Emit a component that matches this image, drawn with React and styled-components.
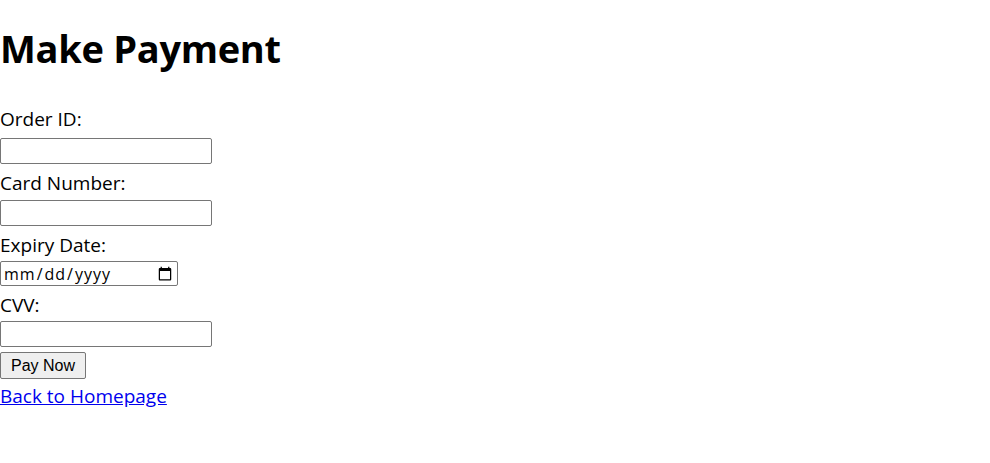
import React from "react";
import styled, { createGlobalStyle } from "styled-components";

const GlobalStyle = createGlobalStyle`
  html, body {
    margin: 0;
    padding: 0;
    background: #ffffff;
  }
  body {
    font-family: "Open Sans", "Noto Sans", sans-serif;
    color: #000000;
  }
`;

const Page = styled.div`
  display: flex;
  flex-direction: column;
  align-items: flex-start;
`;

const Title = styled.h1`
  margin: 20px 0 0;
  font-size: 38px;
  line-height: 56px;
  font-weight: 700;
  letter-spacing: -0.3px;
`;

const Form = styled.form`
  display: flex;
  flex-direction: column;
  align-items: flex-start;
  margin-top: 30px;
`;

const Label = styled.label`
  display: block;
  box-sizing: border-box;
  font-size: 19px;
  line-height: 26px;
  height: ${({ h }) => h || 36}px;
  padding-top: ${({ first }) => (first ? 0 : 6)}px;
`;

const Input = styled.input`
  box-sizing: border-box;
  width: ${({ narrow }) => (narrow ? "178px" : "212px")};
  height: ${({ narrow }) => (narrow ? "25px" : "26px")};
  margin: 0;
  padding: 1px 2px;
  border: 1px solid #767676;
  border-radius: 2px;
  font-family: "Liberation Sans", Arial, sans-serif;
  font-size: 13.33px;
  background: #ffffff;

  &[type="date"] {
    font-family: "Open Sans", sans-serif;
    font-size: 16px;
    letter-spacing: 1px;
  }
`;

const Button = styled.button`
  box-sizing: border-box;
  margin-top: 5px;
  height: 27px;
  padding: 1px 10px;
  border: 1px solid #767676;
  border-radius: 2px;
  background: #efefef;
  font-family: "Liberation Sans", Arial, sans-serif;
  font-size: 16px;
  color: #000000;
`;

const BackLink = styled.a`
  margin-top: 4px;
  font-size: 19px;
  line-height: 26px;
  color: #0000ee;
  text-decoration: underline;
`;

export default function App() {
  return (
    <>
      <GlobalStyle />
      <Page>
        <Title>Make Payment</Title>
        <Form onSubmit={(e) => e.preventDefault()}>
          <Label first h={32} htmlFor="orderId">Order ID:</Label>
          <Input id="orderId" type="text" />
          <Label htmlFor="cardNumber">Card Number:</Label>
          <Input id="cardNumber" type="text" />
          <Label h={35} htmlFor="expiry">Expiry Date:</Label>
          <Input id="expiry" type="date" narrow />
          <Label h={35} htmlFor="cvv">CVV:</Label>
          <Input id="cvv" type="text" />
          <Button type="submit">Pay Now</Button>
        </Form>
        <BackLink href="#">Back to Homepage</BackLink>
      </Page>
    </>
  );
}
